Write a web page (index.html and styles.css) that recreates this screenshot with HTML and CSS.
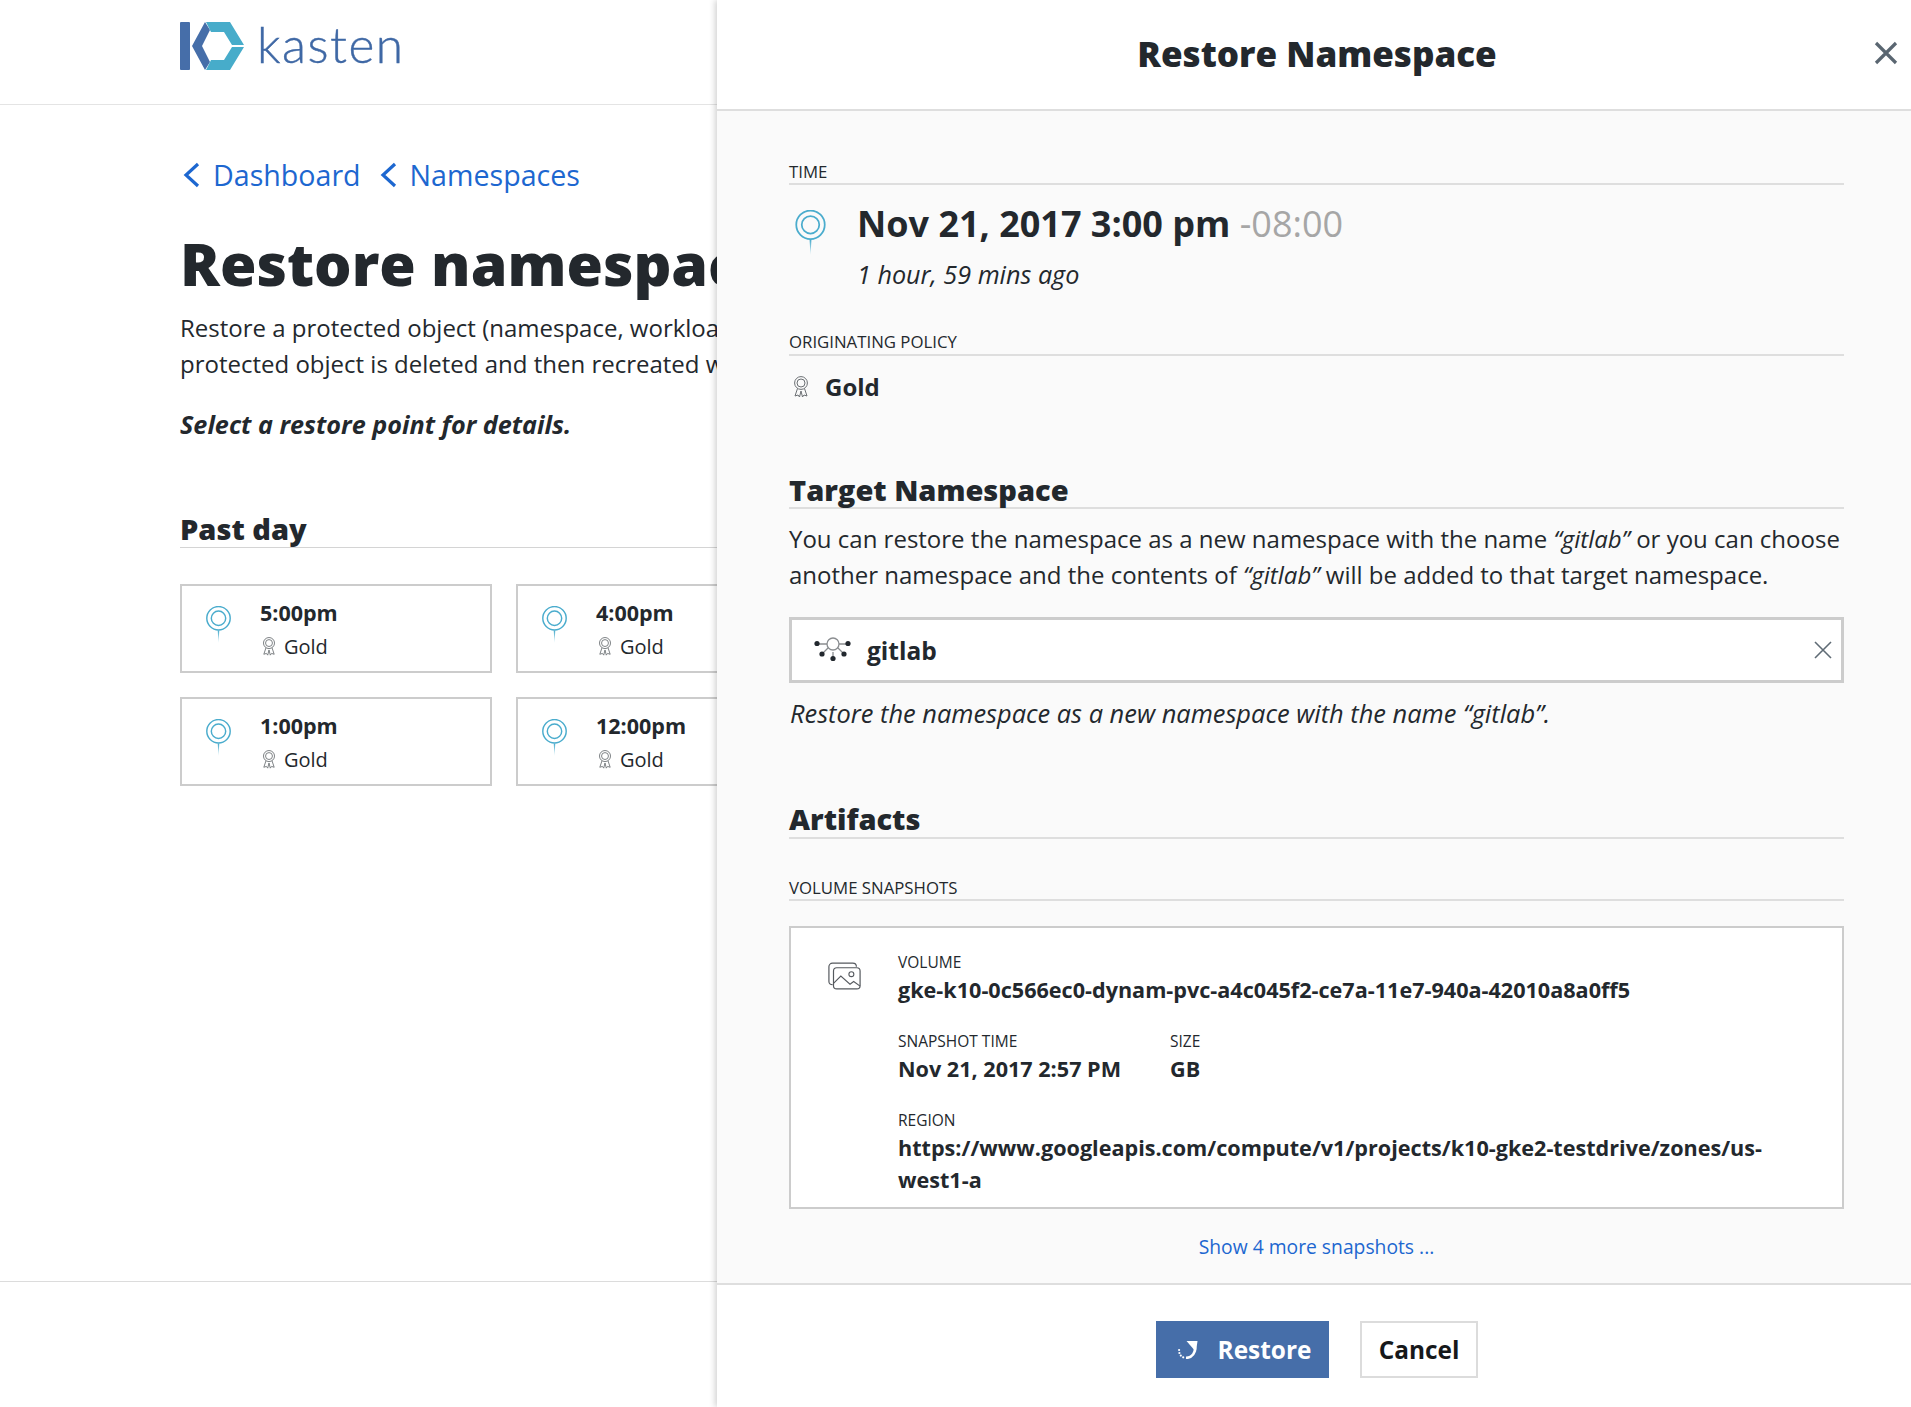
FILE: index.html
```html
<!DOCTYPE html>
<html lang="en">
<head>
    <meta charset="UTF-8">
    <title>Restore Namespace</title>
    <link rel="stylesheet" href="styles.css">
</head>
<body>
<svg class="defs" width="0" height="0">
    <defs>
        <linearGradient id="stem" x1="0" y1="0" x2="0" y2="1">
            <stop offset="0" stop-color="#4aaccd"/>
            <stop offset="1" stop-color="#4aaccd" stop-opacity="0.25"/>
        </linearGradient>
    </defs>
    <symbol id="pin" viewBox="0 0 30 42">
        <circle cx="15" cy="13.500" r="13" fill="none" stroke="#4aaccd" stroke-width="1.600"/>
        <circle cx="15" cy="13.500" r="8" fill="none" stroke="#4aaccd" stroke-width="1.600"/>
        <path d="M14.100 27h1.800L15 41z" fill="url(#stem)"/>
    </symbol>
    <symbol id="medal" viewBox="0 0 16 22">
        <circle cx="8" cy="7" r="6.400" fill="none" stroke="#6b6f73" stroke-width="1"/>
        <circle cx="8" cy="7" r="4" fill="none" stroke="#6b6f73" stroke-width="1"/>
        <path d="M4.500 12.500L2 20l3-1 1.500 2L8 15l1.500 6 1.500-2 3 1-2.500-7.500" fill="none" stroke="#6b6f73" stroke-width="1"/>
    </symbol>
</svg>

<div class="page">
    <header class="topbar">
        <div class="logo">
            <svg width="66" height="50" viewBox="0 0 66 50">
                <rect x="0" y="1" width="10" height="48" rx="1" fill="#466ea9"/>
                <path d="M25 1L12 25l13 24 5-8-8-16 8-16z" fill="#466ea9"/>
                <path d="M26 1h24l14 23H52l-8-13H31z" fill="#47acca"/>
                <path d="M64 26L50 49H26l5-10h13l8-13z" fill="#47acca"/>
            </svg>
            <span class="logo-text">kasten</span>
        </div>
    </header>
    <main class="content">
        <nav class="crumbs">
            <a class="crumb" href="#"><svg width="20" height="26" viewBox="0 0 20 26"><path d="M18 2L6 13l12 11" fill="none" stroke="#1d67d0" stroke-width="3.200"/></svg>Dashboard</a>
            <a class="crumb" href="#"><svg width="20" height="26" viewBox="0 0 20 26"><path d="M18 2L6 13l12 11" fill="none" stroke="#1d67d0" stroke-width="3.200"/></svg>Namespaces</a>
        </nav>
        <h1 class="page-title">Restore namespace</h1>
        <p class="intro">Restore a protected object (namespace, workload, or application) from a restore point. The<br>protected object is deleted and then recreated with the data from the restore point.</p>
        <p class="hint">Select a restore point for details.</p>
        <h2 class="group-title">Past day</h2>
        <div class="points">
            <div class="point">
                <svg class="point-pin"><use href="#pin"/></svg>
                <div><div class="point-time">5:00pm</div><div class="point-policy"><svg class="medal-sm"><use href="#medal"/></svg>Gold</div></div>
            </div>
            <div class="point">
                <svg class="point-pin"><use href="#pin"/></svg>
                <div><div class="point-time">4:00pm</div><div class="point-policy"><svg class="medal-sm"><use href="#medal"/></svg>Gold</div></div>
            </div>
            <div class="point">
                <svg class="point-pin"><use href="#pin"/></svg>
                <div><div class="point-time">1:00pm</div><div class="point-policy"><svg class="medal-sm"><use href="#medal"/></svg>Gold</div></div>
            </div>
            <div class="point">
                <svg class="point-pin"><use href="#pin"/></svg>
                <div><div class="point-time">12:00pm</div><div class="point-policy"><svg class="medal-sm"><use href="#medal"/></svg>Gold</div></div>
            </div>
        </div>
    </main>
    <div class="page-foot"></div>
</div>

<aside class="panel">
    <div class="panel-head">
        <h2 class="panel-title">Restore Namespace</h2>
        <svg class="panel-close" width="24" height="24" viewBox="0 0 24 24"><path d="M2 2l20 20M22 2L2 22" stroke="#5a6671" stroke-width="3.200" fill="none"/></svg>
    </div>
    <div class="panel-body">
        <div class="label label-time">TIME</div>
        <div class="time-row">
            <svg class="time-pin"><use href="#pin"/></svg>
            <div>
                <div class="time-main">Nov 21, 2017 3:00 pm <span class="time-zone">-08:00</span></div>
                <div class="time-ago">1 hour, 59 mins ago</div>
            </div>
        </div>
        <div class="label label-policy">ORIGINATING POLICY</div>
        <div class="policy-row"><svg class="medal-md"><use href="#medal"/></svg>Gold</div>

        <h3 class="section section-target">Target Namespace</h3>
        <p class="target-text">You can restore the namespace as a new namespace with the name <em>“gitlab”</em> or you can choose another namespace and the contents of <em>“gitlab”</em> will be added to that target namespace.</p>
        <div class="select">
            <svg class="select-icon" width="38" height="26" viewBox="0 0 38 26">
                <path d="M5 7h9M24 7h9M8 17l6-6M30 17l-6-6M19 15v6" stroke="#8a8d90" stroke-width="1.300" fill="none"/>
                <circle cx="19" cy="7" r="6" fill="#fff" stroke="#8a8d90" stroke-width="1.300"/>
                <circle cx="3" cy="6.500" r="2.600" fill="#22282e"/>
                <circle cx="34" cy="6.500" r="2.600" fill="#22282e"/>
                <circle cx="8" cy="17" r="2.600" fill="#22282e"/>
                <circle cx="30" cy="17" r="2.600" fill="#22282e"/>
                <circle cx="19" cy="21.500" r="2.600" fill="#22282e"/>
            </svg>
            <span class="select-value">gitlab</span>
            <svg class="select-clear" width="18" height="18" viewBox="0 0 18 18"><path d="M1 1l16 16M17 1L1 17" stroke="#5f6b75" stroke-width="1.600" fill="none"/></svg>
        </div>
        <p class="target-note">Restore the namespace as a new namespace with the name “gitlab”.</p>

        <h3 class="section section-artifacts">Artifacts</h3>
        <div class="label label-snap">VOLUME SNAPSHOTS</div>
        <div class="volume">
            <svg class="volume-icon" width="33" height="28" viewBox="0 0 36 30">
                <path d="M5 24.500c-2.500 0-4-1.500-4-3.500V5c0-2 1.500-4 4-4h22c2 0 4 1.500 4 4" fill="none" stroke="#55595e" stroke-width="1.300"/>
                <rect x="6" y="6" width="29" height="23" rx="3.500" fill="#fff" stroke="#55595e" stroke-width="1.300"/>
                <circle cx="25.500" cy="13" r="2.700" fill="none" stroke="#55595e" stroke-width="1.200"/>
                <path d="M6 23l8-8 10 9 4-3 7 5" fill="none" stroke="#55595e" stroke-width="1.200"/>
            </svg>
            <div class="volume-info">
                <div class="field-label">VOLUME</div>
                <div class="field-value">gke-k10-0c566ec0-dynam-pvc-a4c045f2-ce7a-11e7-940a-42010a8a0ff5</div>
                <div class="field-row">
                    <div>
                        <div class="field-label">SNAPSHOT TIME</div>
                        <div class="field-value">Nov 21, 2017 2:57 PM</div>
                    </div>
                    <div>
                        <div class="field-label">SIZE</div>
                        <div class="field-value">GB</div>
                    </div>
                </div>
                <div class="field-label field-region">REGION</div>
                <div class="field-value">https://www.googleapis.com/compute/v1/projects/k10-gke2-testdrive/zones/us-west1-a</div>
            </div>
        </div>
        <a class="more" href="#">Show 4 more snapshots ...</a>
    </div>
    <div class="panel-foot">
        <button class="btn btn-primary">
            <svg width="20" height="18" viewBox="0 0 20 18">
                <path d="M16.500 5C18.500 11 14 17 8 16.800" fill="none" stroke="#fff" stroke-width="2.600"/>
                <path d="M8.500 0h11L18 11z" fill="#fff"/>
                <circle cx="5.200" cy="16.300" r="1.100" fill="#fff"/>
                <circle cx="2.800" cy="14.600" r="1.100" fill="#fff"/>
                <circle cx="1.400" cy="12" r="1.100" fill="#fff"/>
                <circle cx="1.100" cy="9" r="1.100" fill="#fff"/>
            </svg>
            Restore
        </button>
        <button class="btn btn-plain">Cancel</button>
    </div>
</aside>
</body>
</html>
```

FILE: styles.css
```css
/* Global Styles */
html, body {
    margin: 0;
    padding: 0;
    height: 100%;
}

body {
    font-family: "Open Sans", Arial, sans-serif;
    color: #23282d;
    background-color: #fff;
    position: relative;
    overflow: hidden;
}

.defs {
    position: absolute;
}

a {
    text-decoration: none;
}

/* Page behind the panel */
.page {
    width: 720px;
    height: 100vh;
    display: flex;
    flex-direction: column;
    overflow: hidden;
}

.topbar {
    height: 105px;
    flex: none;
    box-sizing: border-box;
    padding: 21px 0 0 180px;
    border-bottom: 1px solid #e4e4e4;
}

.logo {
    display: flex;
    align-items: flex-start;
    gap: 11px;
}

.logo-text {
    font-family: Lato, sans-serif;
    font-weight: 300;
    font-size: 49.500px;
    line-height: 50px;
    letter-spacing: 1.500px;
    color: #3f68a5;
    margin-top: -2px;
    -webkit-text-stroke: 0.4px #3f68a5;
}

.content {
    flex: 1;
    padding: 50px 0 0 180px;
}

.crumbs {
    display: flex;
    gap: 16px;
}

.crumb {
    display: flex;
    align-items: center;
    gap: 13px;
    font-size: 28.600px;
    line-height: 40px;
    color: #1d67d0;
}

.page-title {
    margin: 28px 0 0;
    font-size: 59px;
    line-height: 80px;
    font-weight: 800;
    white-space: nowrap;
}

.intro {
    margin: 6.500px 0 0;
    font-size: 24px;
    line-height: 36.500px;
    white-space: nowrap;
}

.hint {
    margin: 23px 0 0;
    font-size: 25.200px;
    line-height: 36px;
    font-weight: 700;
    font-style: italic;
}

.group-title {
    margin: 68px 0 0;
    font-size: 29px;
    line-height: 37px;
    font-weight: 800;
    border-bottom: 1px solid #d4d4d4;
}

.points {
    display: grid;
    grid-template-columns: 312px 312px;
    gap: 24px;
    margin-top: 36px;
}

.point {
    height: 89px;
    box-sizing: border-box;
    border: 2px solid #ccc;
    display: flex;
    padding: 20px 0 0 23px;
    gap: 28px;
}

.point-pin {
    width: 27px;
    height: 38px;
    flex: none;
}

.point-time {
    font-size: 21.500px;
    line-height: 28px;
    font-weight: 700;
    margin-top: -7px;
}

.point-policy {
    display: flex;
    align-items: center;
    gap: 8px;
    font-size: 20px;
    line-height: 28px;
    margin-top: 6px;
}

.medal-sm {
    width: 14px;
    height: 19px;
    margin-left: 2px;
}

.page-foot {
    height: 125px;
    flex: none;
    border-top: 1px solid #dcdcdc;
}

/* Slide-in panel */
.panel {
    position: absolute;
    top: 0;
    right: 0;
    bottom: 0;
    width: 1194px;
    display: flex;
    flex-direction: column;
    background-color: #fafafa;
    box-shadow: -2px 0 6px rgba(0, 0, 0, 0.18);
}

.panel-head {
    height: 111px;
    flex: none;
    box-sizing: border-box;
    padding-left: 6px;
    background-color: #fff;
    border-bottom: 2px solid #dedede;
    display: flex;
    justify-content: center;
    align-items: center;
    position: relative;
}

.panel-title {
    margin: 0 0 2px;
    font-size: 35px;
    font-weight: 800;
}

.panel-close {
    position: absolute;
    right: 13px;
    top: 41px;
}

.panel-body {
    flex: 1;
    padding: 0 67px 0 72px;
}

.label {
    font-size: 16.800px;
    line-height: 22px;
    border-bottom: 2px solid #dedede;
}

.label-time {
    margin-top: 50px;
}

.time-row {
    display: flex;
    gap: 30px;
    margin-top: 12px;
}

.time-pin {
    width: 33px;
    height: 46px;
    flex: none;
    margin: 13px 0 0 5px;
}

.time-main {
    font-size: 36px;
    line-height: 54px;
    font-weight: 700;
}

.time-zone {
    font-weight: 400;
    color: #a6a6a6;
}

.time-ago {
    font-size: 25.200px;
    line-height: 36px;
    font-style: italic;
    margin-top: 5px;
}

.label-policy {
    margin-top: 39px;
    padding-bottom: 1px;
}

.policy-row {
    display: flex;
    align-items: center;
    gap: 16px;
    font-size: 24px;
    line-height: 36px;
    font-weight: 700;
    margin-top: 13px;
    padding-left: 4px;
}

.medal-md {
    width: 16px;
    height: 22px;
}

.section {
    margin: 0;
    font-size: 29px;
    line-height: 36px;
    font-weight: 800;
    border-bottom: 2px solid #dedede;
}

.section-target {
    margin-top: 68px;
    line-height: 34px;
}

.target-text {
    margin: 12px 0 0;
    font-size: 24px;
    line-height: 36px;
}

.select {
    height: 66px;
    box-sizing: border-box;
    margin-top: 24px;
    background-color: #fff;
    border: 3px solid #ccc;
    display: flex;
    align-items: center;
    padding: 0 9px 0 22px;
}

.select-value {
    flex: 1;
    margin-left: 15px;
    font-size: 24.500px;
    font-weight: 700;
}

.target-note {
    margin: 12px 0 0 1px;
    font-size: 25.400px;
    line-height: 36px;
    font-style: italic;
}

.section-artifacts {
    margin-top: 70px;
}

.label-snap {
    margin-top: 38px;
}

.volume {
    box-sizing: border-box;
    height: 283px;
    margin-top: 25px;
    background-color: #fff;
    border: 2px solid #ccc;
    display: flex;
    padding: 23px 70px 0 37px;
    gap: 37px;
}

.volume-icon {
    flex: none;
    margin-top: 11px;
}

.field-label {
    font-size: 15.500px;
    line-height: 22px;
}

.field-value {
    font-size: 21.600px;
    line-height: 32px;
    font-weight: 700;
    margin-top: 1px;
}

.field-row {
    display: flex;
    gap: 49px;
    margin-top: 24px;
}

.field-region {
    margin-top: 24px;
}

.more {
    display: block;
    text-align: center;
    margin-top: 23px;
    font-size: 19.300px;
    line-height: 30px;
    color: #1d67d0;
}

.panel-foot {
    height: 124px;
    flex: none;
    box-sizing: border-box;
    padding: 36px 0 0 6px;
    background-color: #fff;
    border-top: 2px solid #dedede;
    display: flex;
    justify-content: center;
    align-items: flex-start;
    gap: 31px;
}

.btn {
    height: 57px;
    box-sizing: border-box;
    font-family: inherit;
    font-size: 24.400px;
    font-weight: 700;
    cursor: pointer;
}

.btn-primary {
    width: 173px;
    display: flex;
    align-items: center;
    justify-content: center;
    gap: 20px;
    padding: 0 0 0 4px;
    border: none;
    color: #fff;
    background-color: #466ea9;
}

.btn-plain {
    width: 118px;
    padding: 0;
    border: 2px solid #dcdcdc;
    background-color: #fff;
    color: #16181a;
}
```
